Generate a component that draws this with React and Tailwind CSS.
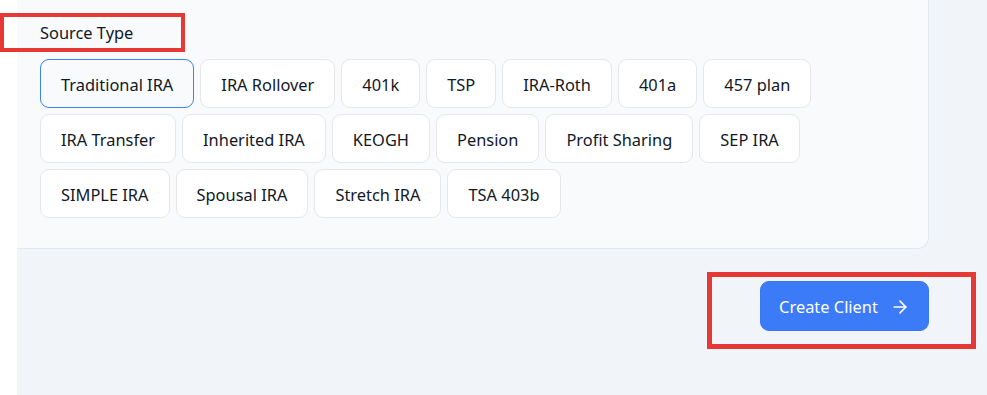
import { ArrowRight } from "lucide-react";

const sourceTypes = [
  ["Traditional IRA", "IRA Rollover", "401k", "TSP", "IRA-Roth", "401a", "457 plan"],
  ["IRA Transfer", "Inherited IRA", "KEOGH", "Pension", "Profit Sharing", "SEP IRA"],
  ["SIMPLE IRA", "Spousal IRA", "Stretch IRA", "TSA 403b"],
];

export default function App() {
  const selected = "Traditional IRA";

  return (
    <div
      className="relative flex h-[395px] w-[987px] overflow-hidden bg-white"
      style={{ fontFamily: '"Noto Sans", "Open Sans", sans-serif' }}
    >
      <div className="w-[17px] shrink-0 bg-white" />
      <main className="flex flex-1 flex-col bg-[#f1f4f9] pr-[58px]">
        <section className="rounded-br-xl border-r border-b border-[#e2e8f0] bg-[#f8fafc] pt-[23px] pb-[30px] pl-[23px]">
          <div className="mb-[16px] text-[16.4px] leading-[20px] text-[#111827]">Source Type</div>
          <div className="flex flex-col gap-[6px]">
            {sourceTypes.map((row, i) => (
              <div key={i} className="flex gap-[6px]">
                {row.map((item) => (
                  <button
                    key={item}
                    className={`h-[49px] rounded-[9px] border px-[20px] pt-[4px] text-[16.4px] text-[#111827] ${
                      item === selected
                        ? "border-[#3b82f6] bg-[#f8fafc]"
                        : "border-[#e5e7eb] bg-white"
                    }`}
                  >
                    {item}
                  </button>
                ))}
              </div>
            ))}
          </div>
        </section>
        <div className="mt-[32px] flex justify-end">
          <button className="flex h-[50px] w-[169px] items-center justify-center gap-3 rounded-[9px] border border-[#3a76f0] bg-[#3b7bf7] pt-[2px] text-[16.4px] text-white">
            Create Client
            <ArrowRight size={20} strokeWidth={2} />
          </button>
        </div>
      </main>

      {/* annotation boxes */}
      <div className="absolute top-[13px] left-0 h-[39px] w-[185px] border-4 border-[#e53935]" />
      <div className="absolute top-[272px] left-[707px] h-[77px] w-[269px] border-[5px] border-[#e53935]" />
    </div>
  );
}
